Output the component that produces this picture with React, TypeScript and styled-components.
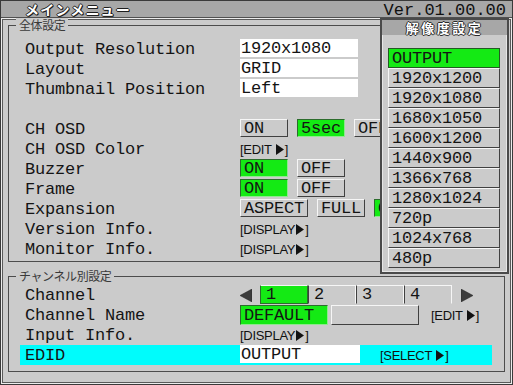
import React from "react";
import styled, { createGlobalStyle } from "styled-components";

const BG = "#cbcbcb";
const BAR = "#a7a7a7";
const GREEN = "#14ea14";
const CYAN = "#00fcfc";
const MONO = `"Liberation Mono", "DejaVu Sans Mono", monospace`;
const JP = `"Noto Sans CJK JP", "Noto Sans", sans-serif`;
const SANS = `"Liberation Sans", Arial, sans-serif`;

const GlobalStyle = createGlobalStyle`
  html, body { margin: 0; padding: 0; background: ${BG}; }
  body { font-family: ${MONO}; }
`;

const Screen = styled.div`
  position: relative;
  box-sizing: border-box;
  width: 513px;
  height: 385px;
  border: 1px solid #3a3a3a;
  background: ${BG};
  display: flex;
  flex-direction: column;
  overflow: hidden;
`;

const TitleBar = styled.div`
  flex: none;
  height: 16px;
  background: ${BAR};
  border-bottom: 1px solid #505050;
  display: flex;
  align-items: flex-end;
  justify-content: space-between;
  padding: 0 6px 0 24px;
`;

const Title = styled.span`
  align-self: center;
  font-family: ${JP};
  font-weight: 700;
  font-size: 14px;
  line-height: 15px;
  letter-spacing: 1.2px;
  color: #fff;
  text-shadow: 1px 0 #1e1e1e, -1px 0 #1e1e1e, 0 1px #1e1e1e, 0 -1px #1e1e1e,
    1px 1px #1e1e1e;
`;

const Version = styled.span`
  font-family: ${MONO};
  font-size: 17px;
  letter-spacing: 0;
  line-height: 16px;
  margin-bottom: -2px;
  color: #111;
`;

const Body = styled.div`
  flex: 1;
  display: flex;
  flex-direction: column;
  border: 1px solid #ececec;
`;

const BodyInner = styled.div`
  flex: 1;
  display: flex;
  flex-direction: column;
  gap: 14px;
  border: 1px solid #5a5a5a;
  padding: 5px 5px 0 5px;
`;

const Section = styled.div<{ $pt: number; $pb: number }>`
  position: relative;
  border: 1px solid #4c4c4c;
  padding: ${(p) => p.$pt}px 0 ${(p) => p.$pb}px 11px;
`;

const Legend = styled.span`
  position: absolute;
  top: -8px;
  left: 7px;
  padding: 0 3px;
  background: ${BG};
  font-family: ${JP};
  font-size: 12px;
  line-height: 14px;
  letter-spacing: -0.4px;
  color: #3a3a3a;
`;

const Row = styled.div<{ $hl?: boolean }>`
  box-sizing: border-box;
  display: grid;
  grid-template-columns: 215px 1fr;
  width: 472px;
  height: 20px;
  padding-left: 5px;
  background: ${(p) => (p.$hl ? CYAN : "transparent")};
`;

const Label = styled.span`
  font-family: ${MONO};
  font-size: 17px;
  letter-spacing: -0.2px;
  line-height: 21px;
  color: #141414;
  white-space: pre;
`;

const Value = styled.div<{ $gap?: number }>`
  display: flex;
  align-items: flex-start;
  gap: ${(p) => p.$gap ?? 9}px;
  height: 20px;
`;

const ValueBox = styled.div<{ $w?: number }>`
  box-sizing: border-box;
  width: ${(p) => p.$w ?? 118}px;
  height: 18px;
  padding-left: 1px;
  background: #fff;
  font-family: ${MONO};
  font-size: 17px;
  letter-spacing: -0.2px;
  line-height: 19px;
  color: #141414;
  white-space: pre;
`;

const Btn = styled.div<{ $on?: boolean; $w?: number; $h?: number }>`
  box-sizing: border-box;
  flex: none;
  width: ${(p) => p.$w ?? 48}px;
  height: ${(p) => p.$h ?? 18}px;
  padding-left: 3px;
  background: ${(p) => (p.$on ? GREEN : BG)};
  border: 1px solid;
  border-color: ${(p) =>
    p.$on
      ? "#2c6c2c #8fe88f #8fe88f #2c6c2c"
      : "#f6f6f6 #404040 #404040 #f6f6f6"};
  font-family: ${MONO};
  font-size: 17px;
  letter-spacing: -0.2px;
  line-height: ${(p) => (p.$h ?? 18) - 1}px;
  color: #141414;
  white-space: pre;
`;

const Link = styled.span<{ $ml?: number }>`
  display: inline-flex;
  align-items: center;
  height: 20px;
  margin-left: ${(p) => p.$ml ?? 0}px;
  font-family: ${SANS};
  font-size: 13px;
  letter-spacing: -0.3px;
  color: #111;
  white-space: pre;
`;

const Tabs = styled.div`
  display: flex;
  margin: 0 9px 0 8px;
`;

const Tab = styled.div<{ $on?: boolean }>`
  box-sizing: border-box;
  width: 48px;
  height: 19px;
  padding-left: 5px;
  background: ${(p) => (p.$on ? GREEN : BG)};
  border-top: 1px solid #f6f6f6;
  border-left: 1px solid ${(p) => (p.$on ? "#2c6c2c" : "#404040")};
  border-bottom: 1px solid ${(p) => (p.$on ? "#2c6c2c" : "transparent")};
  border-right: 1px solid ${(p) => (p.$on ? "#2c6c2c" : "#f6f6f6")};
  font-family: ${MONO};
  font-size: 17px;
  line-height: 18px;
  color: #141414;
`;

const ArrowBox = styled.span`
  display: inline-flex;
  align-items: center;
  height: 20px;
`;

const Popup = styled.div`
  position: absolute;
  left: 379px;
  top: 17px;
  box-sizing: border-box;
  width: 129px;
  height: 256px;
  background: ${BG};
  border: 2px solid #4a4a4a;
  box-shadow: inset 0 0 0 1px #e6e6e6;
  display: flex;
  flex-direction: column;
`;

const PopupHeader = styled.div`
  height: 15px;
  background: ${BAR};
  text-align: center;
  font-family: ${JP};
  font-weight: 700;
  font-size: 13px;
  line-height: 15px;
  letter-spacing: 2.5px;
  color: #fff;
  text-shadow: 1px 0 #2a2a2a, -1px 0 #2a2a2a, 0 1px #2a2a2a, 0 -1px #2a2a2a;
`;

const PopupList = styled.div`
  display: flex;
  flex-direction: column;
  padding: 13px 7px 4px 6px;
`;

const PopupItem = styled.div<{ $on?: boolean }>`
  box-sizing: border-box;
  height: 20px;
  padding-left: 3px;
  background: ${(p) => (p.$on ? GREEN : BG)};
  border: 1px solid;
  border-color: ${(p) =>
    p.$on ? "#245a24" : "#f6f6f6 #404040 #404040 #f6f6f6"};
  font-family: ${MONO};
  font-size: 17px;
  letter-spacing: -0.2px;
  line-height: 20px;
  color: #141414;
`;

const Tri = () => (
  <svg width="8" height="11" viewBox="0 0 8 11" style={{ margin: "0 1px" }}>
    <polygon points="0,0 8,5.5 0,11" fill="#111" />
  </svg>
);

const BigArrow = ({ dir }: { dir: "left" | "right" }) => (
  <ArrowBox>
    <svg width="12" height="13" viewBox="0 0 12 13">
      <polygon
        points={dir === "left" ? "12,0 0,6.5 12,13" : "0,0 12,6.5 0,13"}
        fill="#3c3c3c"
        stroke="#222"
        strokeWidth="0.5"
      />
    </svg>
  </ArrowBox>
);

const Action = ({ text, spaced, ml }: { text: string; spaced?: boolean; ml?: number }) => (
  <Link $ml={ml}>
    [{text}
    {spaced ? " " : ""}
    <Tri />]
  </Link>
);

const resolutions = [
  "OUTPUT",
  "1920x1200",
  "1920x1080",
  "1680x1050",
  "1600x1200",
  "1440x900",
  "1366x768",
  "1280x1024",
  "720p",
  "1024x768",
  "480p",
];

export default function App() {
  return (
    <>
      <GlobalStyle />
      <Screen>
        <TitleBar>
          <Title>メインメニュー</Title>
          <Version>Ver.01.00.00</Version>
        </TitleBar>
        <Body>
          <BodyInner>
            <Section $pt={13} $pb={2}>
              <Legend>全体設定</Legend>
              <Row>
                <Label>Output Resolution</Label>
                <Value>
                  <ValueBox>1920x1080</ValueBox>
                </Value>
              </Row>
              <Row>
                <Label>Layout</Label>
                <Value>
                  <ValueBox>GRID</ValueBox>
                </Value>
              </Row>
              <Row>
                <Label>Thumbnail Position</Label>
                <Value>
                  <ValueBox>Left</ValueBox>
                </Value>
              </Row>
              <Row />
              <Row>
                <Label>CH OSD</Label>
                <Value>
                  <Btn>ON</Btn>
                  <Btn $on>5sec</Btn>
                  <Btn>OFF</Btn>
                </Value>
              </Row>
              <Row>
                <Label>CH OSD Color</Label>
                <Value>
                  <Action text="EDIT" spaced />
                </Value>
              </Row>
              <Row>
                <Label>Buzzer</Label>
                <Value>
                  <Btn $on>ON</Btn>
                  <Btn>OFF</Btn>
                </Value>
              </Row>
              <Row>
                <Label>Frame</Label>
                <Value>
                  <Btn $on>ON</Btn>
                  <Btn>OFF</Btn>
                </Value>
              </Row>
              <Row>
                <Label>Expansion</Label>
                <Value>
                  <Btn $w={68}>ASPECT</Btn>
                  <Btn>FULL</Btn>
                  <Btn $on $w={80}>ORIGINAL</Btn>
                </Value>
              </Row>
              <Row>
                <Label>Version Info.</Label>
                <Value>
                  <Action text="DISPLAY" />
                </Value>
              </Row>
              <Row>
                <Label>Monitor Info.</Label>
                <Value>
                  <Action text="DISPLAY" />
                </Value>
              </Row>
            </Section>
            <Section $pt={8} $pb={6}>
              <Legend>チャンネル別設定</Legend>
              <Row>
                <Label>Channel</Label>
                <Value $gap={0}>
                  <BigArrow dir="left" />
                  <Tabs>
                    <Tab $on>1</Tab>
                    <Tab>2</Tab>
                    <Tab>3</Tab>
                    <Tab>4</Tab>
                  </Tabs>
                  <BigArrow dir="right" />
                </Value>
              </Row>
              <Row>
                <Label>Channel Name</Label>
                <Value $gap={3}>
                  <Btn $on $w={88} $h={20}>DEFAULT</Btn>
                  <Btn $w={88} $h={20} />
                  <Action text="EDIT" spaced ml={9} />
                </Value>
              </Row>
              <Row>
                <Label>Input Info.</Label>
                <Value>
                  <Action text="DISPLAY" />
                </Value>
              </Row>
              <Row $hl>
                <Label>EDID</Label>
                <Value $gap={20}>
                  <ValueBox $w={120}>OUTPUT</ValueBox>
                  <Action text="SELECT" spaced />
                </Value>
              </Row>
            </Section>
          </BodyInner>
        </Body>
        <Popup>
          <PopupHeader>解像度設定</PopupHeader>
          <PopupList>
            {resolutions.map((r, i) => (
              <PopupItem key={r} $on={i === 0}>
                {r}
              </PopupItem>
            ))}
          </PopupList>
        </Popup>
      </Screen>
    </>
  );
}
